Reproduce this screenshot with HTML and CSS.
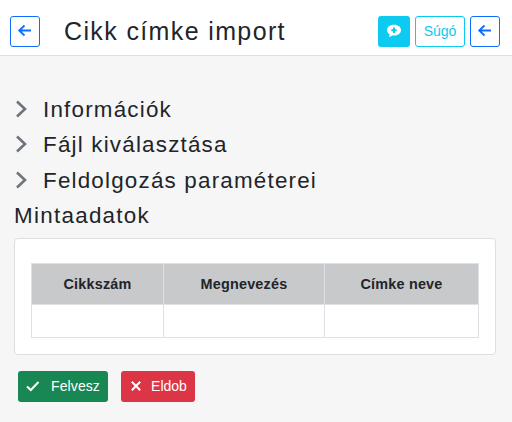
FILE: index.html
```html
<!DOCTYPE html>
<html lang="hu">

<head>
    <meta charset="UTF-8">
    <title>Cikk címke import</title>
    <link rel="stylesheet" href="styles.css">
</head>

<body>
    <header class="topbar">
        <button class="btn btn-back">
            <svg class="arrow" viewBox="0 0 16 16"><path d="M14 7.500H2.500M7.500 2.500L2.200 7.500l5.300 5" /></svg>
        </button>
        <h1 class="title">Cikk címke import</h1>
        <div class="actions">
            <button class="btn btn-chat">
                <svg viewBox="0 0 16 16" width="16" height="16">
                    <path class="bubble" d="M8 1.800c3.900 0 7 2.300 7 5.400s-3.100 5.400-7 5.400c-.6 0-1.200-.1-1.800-.2-.9.7-2.100 1.300-3.500 1.400.6-.7.9-1.500 1-2.400C2.100 10.400 1 8.900 1 7.200 1 4.100 4.100 1.800 8 1.800z" />
                    <path class="plus" d="M8 4.500v5.400M5.300 7.200h5.400" />
                </svg>
            </button>
            <button class="btn btn-help">Súgó</button>
            <button class="btn btn-back">
                <svg class="arrow" viewBox="0 0 16 16"><path d="M14 7.500H2.500M7.500 2.500L2.200 7.500l5.300 5" /></svg>
            </button>
        </div>
    </header>

    <main class="content">
        <div class="section">
            <svg class="chevron" viewBox="0 0 12 18"><path d="M2 1.500L10 9 2 16.500" /></svg>
            <span>Információk</span>
        </div>
        <div class="section">
            <svg class="chevron" viewBox="0 0 12 18"><path d="M2 1.500L10 9 2 16.500" /></svg>
            <span>Fájl kiválasztása</span>
        </div>
        <div class="section">
            <svg class="chevron" viewBox="0 0 12 18"><path d="M2 1.500L10 9 2 16.500" /></svg>
            <span>Feldolgozás paraméterei</span>
        </div>
        <h2 class="sample-title">Mintaadatok</h2>

        <div class="card">
            <table>
                <thead>
                    <tr>
                        <th class="col-1">Cikkszám</th>
                        <th class="col-2">Megnevezés</th>
                        <th>Címke neve</th>
                    </tr>
                </thead>
                <tbody>
                    <tr>
                        <td></td>
                        <td></td>
                        <td></td>
                    </tr>
                </tbody>
            </table>
        </div>

        <div class="footer-buttons">
            <button class="btn btn-save">
                <svg viewBox="0 0 14 14" width="14" height="14"><path d="M1 7.500l3.800 3.500 7.700-8" /></svg>
                Felvesz
            </button>
            <button class="btn btn-cancel">
                <svg viewBox="0 0 14 14" width="14" height="14"><path d="M2.800 2.800l8.400 8.400M11.200 2.800l-8.400 8.400" /></svg>
                Eldob
            </button>
        </div>
    </main>
</body>

</html>
```

FILE: styles.css
```css
html, body {
    height: 100%;
    margin: 0;
    padding: 0;
}

body {
    background-color: #f6f6f6;
    color: #212529;
    font-family: "Liberation Sans", Arial, sans-serif;
    overflow: hidden;
}

.topbar {
    display: flex;
    align-items: center;
    height: 56px;
    padding: 7px 12px 0 10px;
    box-sizing: border-box;
    background-color: #fff;
    border-bottom: 1px solid #dfdfdf;
}

.title {
    margin: 0 0 0 24px;
    font-size: 25px;
    font-weight: 400;
    letter-spacing: 1.370px;
}

.actions {
    display: flex;
    gap: 5px;
    margin-left: auto;
}

.btn {
    display: flex;
    align-items: center;
    justify-content: center;
    height: 31px;
    padding: 0;
    box-sizing: border-box;
    border: 1px solid transparent;
    border-radius: 3px;
    background: none;
    font-family: inherit;
    font-size: 14px;
}

.btn-back {
    width: 30px;
    border-color: #0d6efd;
}

.arrow {
    width: 16px;
    height: 16px;
    fill: none;
    stroke: #0d6efd;
    stroke-width: 1.800;
}

.btn-chat {
    width: 32px;
    background-color: #0dcaf0;
}

.bubble {
    fill: #fff;
}

.plus {
    fill: none;
    stroke: #0dcaf0;
    stroke-width: 2;
}

.btn-help {
    width: 50px;
    border-color: #0dcaf0;
    color: #0dcaf0;
}

.content {
    padding: 0 16px 0 14px;
}

.section {
    display: flex;
    align-items: center;
    height: 35.500px;
    font-size: 22.400px;
    letter-spacing: 1.200px;
}

.section:first-child {
    margin-top: 36px;
}

.chevron {
    width: 12px;
    height: 18px;
    margin: 0 16px 2px 1px;
    fill: none;
    stroke: #6c757d;
    stroke-width: 2.600;
}

.sample-title {
    margin: 0 0 5px;
    height: 34px;
    line-height: 33px;
    font-size: 22.400px;
    font-weight: 400;
    letter-spacing: 1.280px;
}

.card {
    padding: 24px 16px 16px;
    background-color: #fff;
    border: 1px solid #dfdfdf;
    border-radius: 4px;
}

table {
    width: 100%;
    border-collapse: collapse;
    table-layout: fixed;
}

th,
td {
    border: 1px solid #dee2e6;
    padding: 8px;
    text-align: center;
}

th {
    height: 41px;
    box-sizing: border-box;
    background-color: #c8c9cb;
    font-size: 14.400px;
    font-weight: 700;
    letter-spacing: 0.200px;
}

td {
    height: 33px;
    box-sizing: border-box;
}

.col-1 {
    width: 132px;
}

.col-2 {
    width: 161px;
}

.footer-buttons {
    display: flex;
    gap: 13px;
    margin: 16px 0 0 4px;
}

.btn-save,
.btn-cancel {
    color: #fff;
}

.btn-save svg,
.btn-cancel svg {
    fill: none;
    stroke: #fff;
    stroke-width: 2;
}

.btn-save {
    gap: 11px;
    width: 90px;
    background-color: #198754;
    letter-spacing: 0.100px;
}

.btn-cancel {
    gap: 8px;
    width: 74px;
    background-color: #dc3545;
}
```
